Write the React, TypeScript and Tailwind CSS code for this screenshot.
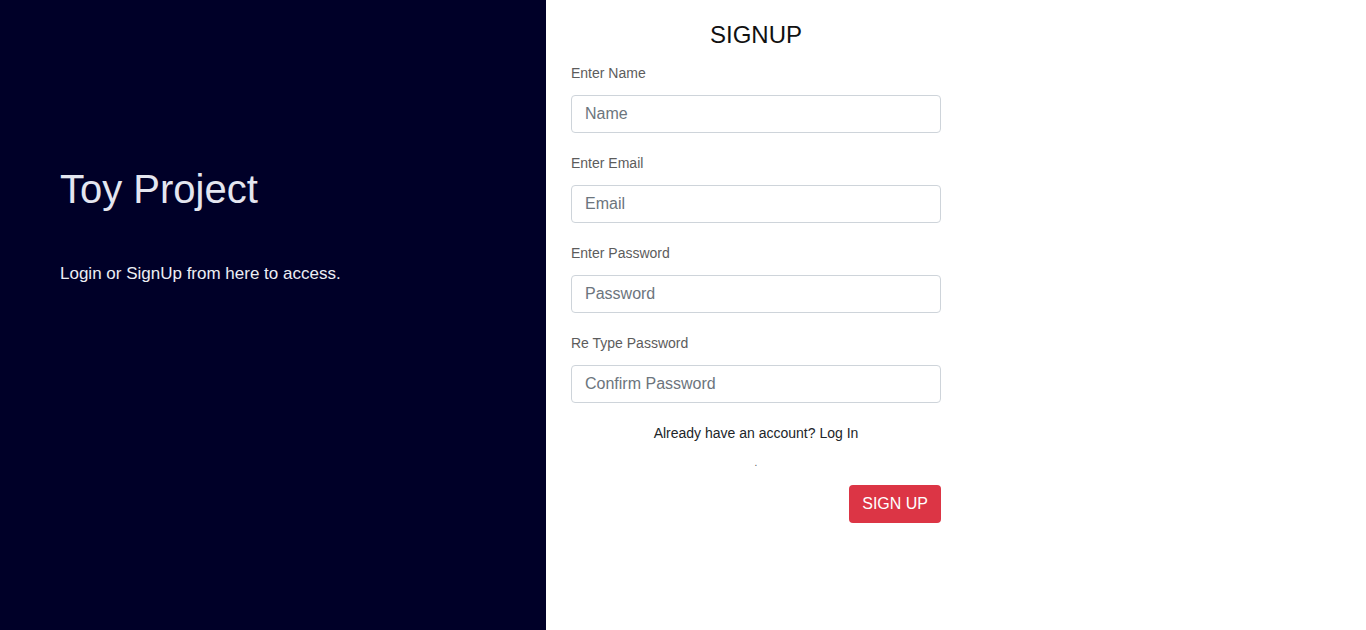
import React from "react";

const fields = [
    { label: "Enter Name", placeholder: "Name", type: "text" },
    { label: "Enter Email", placeholder: "Email", type: "email" },
    { label: "Enter Password", placeholder: "Password", type: "password" },
    { label: "Re Type Password", placeholder: "Confirm Password", type: "password" },
];

export default function App() {
    return (
        <div className="flex h-[630px] w-full font-['Liberation_Sans',Arial,sans-serif]">
            <aside className="w-[546px] shrink-0 bg-[#000028] pl-[60px] pt-[165px]">
                <h1 className="text-[40px] leading-[48px] text-[#e4e6f0]">Toy Project</h1>
                <p className="mt-[49px] text-[17px] leading-[24px] text-[#eceef4]">
                    Login or SignUp from here to access.
                </p>
            </aside>

            <main className="flex-1 bg-white">
                <form className="ml-[25px] w-[370px] pt-[20px]">
                    <h2 className="text-center text-[24px] leading-[29px] text-[#111]">SIGNUP</h2>
                    <div className="mt-[14px]">
                        {fields.map((f) => (
                            <div key={f.label} className="mb-[20px]">
                                <label className="mb-[11px] block text-[14px] leading-[21px] text-[#5c5c5c]">
                                    {f.label}
                                </label>
                                <input
                                    type={f.type}
                                    placeholder={f.placeholder}
                                    className="block h-[38px] w-full rounded-[4px] border border-[#ced4da] pl-[13px] pr-[12px] text-[16px] text-[#495057] placeholder:text-[#6c757d] outline-none"
                                />
                            </div>
                        ))}
                    </div>
                    <p className="mt-[1px] text-center text-[14px] leading-[21px] text-[#212529]">
                        Already have an account? Log In
                    </p>
                    <p className="mt-[10px] text-center text-[10px] leading-[18px] text-[#555]">.</p>
                    <div className="mt-[13px] flex justify-end">
                        <button
                            type="button"
                            className="h-[38px] rounded-[4px] bg-[#dc3545] px-[13px] text-[16px] text-white"
                        >
                            SIGN UP
                        </button>
                    </div>
                </form>
            </main>
        </div>
    );
}
